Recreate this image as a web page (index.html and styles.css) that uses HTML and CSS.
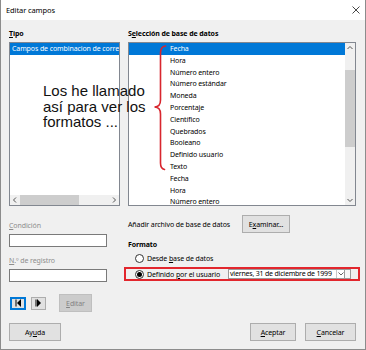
FILE: index.html
```html
<!DOCTYPE html>
<html lang="es">
<head>
    <meta charset="UTF-8">
    <meta name="viewport" content="width=device-width, initial-scale=1.0">
    <title>Editar campos</title>
    <link rel="stylesheet" href="styles.css">
</head>
<body>
<div class="window">
    <div class="titlebar">
        <span>Editar campos</span>
        <svg class="close" width="8" height="8" viewBox="0 0 8 8">
            <path d="M0.5 0.5 L7.5 7.5 M7.5 0.5 L0.5 7.5" stroke="#333" stroke-width="0.9" fill="none"/>
        </svg>
    </div>

    <div class="content">
        <!-- columna izquierda -->
        <div class="col col-left">
            <div class="label bold"><u>T</u>ipo</div>
            <div class="listbox type-list">
                <div class="rows">
                    <div class="row selected">Campos de combinacion de correspondencia</div>
                </div>
                <div class="hscroll">
                    <svg class="sb-arrow" width="10" height="10" viewBox="0 0 10 10"><path d="M6 2.5 L3.5 5 L6 7.5" stroke="#555" fill="none"/></svg>
                    <div class="htrack"><div class="hthumb"></div></div>
                    <svg class="sb-arrow" width="10" height="10" viewBox="0 0 10 10"><path d="M4 2.5 L6.5 5 L4 7.5" stroke="#555" fill="none"/></svg>
                </div>
            </div>

            <div class="label disabled mt-cond"><u>C</u>ondición</div>
            <div class="input"></div>
            <div class="label disabled mt-reg"><u>N</u>.º de registro</div>
            <div class="input"></div>

            <div class="nav-row">
                <button class="btn btn-nav focused">
                    <svg width="7" height="8" viewBox="0 0 7 8"><rect x="0.5" y="0.5" width="1" height="7" fill="#000"/><path d="M6 0 L2 4 L6 8 Z" fill="#000"/></svg>
                </button>
                <button class="btn btn-nav">
                    <svg width="7" height="8" viewBox="0 0 7 8"><rect x="0.5" y="0.5" width="1" height="7" fill="#000"/><path d="M2 0 L6 4 L2 8 Z" fill="#000"/></svg>
                </button>
                <button class="btn btn-edit" disabled><u>E</u>ditar</button>
            </div>
        </div>

        <!-- columna derecha -->
        <div class="col col-right">
            <div class="label bold">S<u>e</u>lección de base de datos</div>
            <div class="listbox db-list">
                <div class="rows">
                    <div class="row selected">Fecha</div>
                    <div class="row">Hora</div>
                    <div class="row">Número entero</div>
                    <div class="row">Número estándar</div>
                    <div class="row">Moneda</div>
                    <div class="row">Porcentaje</div>
                    <div class="row">Científico</div>
                    <div class="row">Quebrados</div>
                    <div class="row">Booleano</div>
                    <div class="row">Definido usuario</div>
                    <div class="row">Texto</div>
                    <div class="row">Fecha</div>
                    <div class="row">Hora</div>
                    <div class="row">Número entero</div>
                </div>
                <div class="vscroll">
                    <svg class="sb-arrow" width="10" height="10" viewBox="0 0 10 10"><path d="M2.5 6 L5 3.5 L7.5 6" stroke="#555" fill="none"/></svg>
                    <div class="vtrack"><div class="vthumb"></div></div>
                    <svg class="sb-arrow" width="10" height="10" viewBox="0 0 10 10"><path d="M2.5 4 L5 6.5 L7.5 4" stroke="#555" fill="none"/></svg>
                </div>
            </div>

            <div class="add-row">
                <span class="add-label">Añadir archivo de base de datos</span>
                <button class="btn btn-browse">E<u>x</u>aminar...</button>
            </div>

            <div class="label bold mt-format">Formato</div>
            <div class="radio-row">
                <span class="radio"></span>
                <span>Desde <u>b</u>ase de datos</span>
            </div>
            <div class="highlight">
                <span class="radio checked"></span>
                <span class="radio-text">Definido <u>p</u>or el usuario</span>
                <div class="combo">
                    <span class="combo-text">viernes, 31 de diciembre de 1999</span>
                    <span class="combo-btn">
                        <svg width="6" height="4" viewBox="0 0 6 4"><path d="M0.5 0.5 L3 3 L5.5 0.5" stroke="#666" fill="none"/></svg>
                    </span>
                    <span class="combo-extra"></span>
                </div>
            </div>
        </div>
    </div>

    <div class="footer">
        <button class="btn btn-help">Ay<u>u</u>da</button>
        <div class="footer-right">
            <button class="btn btn-ok"><u>A</u>ceptar</button>
            <button class="btn btn-cancel"><u>C</u>ancelar</button>
        </div>
    </div>

    <!-- anotación sobre la captura -->
    <div class="note">Los he llamado<br>así para ver los<br>formatos ...</div>
    <svg class="brace" width="366" height="350" viewBox="0 0 366 350">
        <path d="M165.5 46 C162 46.5 160.5 49 160.5 53 L160.5 100 C160.5 104.5 158.5 107 154.5 107 C158.5 107 160.5 109.5 160.5 114 L160.5 163 C160.5 167 162 169 164.5 169.5" stroke="#d8262e" stroke-width="1.6" fill="none" stroke-linecap="round"/>
    </svg>
</div>
</body>
</html>
```

FILE: styles.css
```css
* { box-sizing: border-box; }

body {
    margin: 0;
    font-family: "Noto Sans", "Open Sans", sans-serif;
    font-size: 7px;
    letter-spacing: -0.1px;
    color: #000;
    background: #fff;
}

u { text-decoration: underline; text-underline-offset: 1px; }

.window {
    position: relative;
    width: 366px;
    height: 350px;
    background: #f0f0f0;
    border: 1px solid #8c8c8c;
    border-top: none;
}

.titlebar {
    height: 20px;
    background: #fff;
    display: flex;
    align-items: center;
    justify-content: space-between;
    padding: 0 5px 0 5px;
    font-size: 7.5px;
}

.content {
    display: flex;
    gap: 8px;
    padding: 8px 0 0 8px;
}

.col { display: flex; flex-direction: column; }
.col-left { width: 111px; }
.col-right { width: 228px; }

.label {
    height: 12px;
    line-height: 12px;
    margin-bottom: 2px;
    white-space: nowrap;
}
.bold { font-weight: bold; }
.disabled { color: #8d8d8d; }
.mt-cond { margin-top: 14px; }
.mt-reg { margin-top: 8px; }
.mt-format { margin-top: 6px; margin-bottom: 1px; }

.listbox {
    height: 164px;
    background: #fff;
    border: 1px solid #828790;
    display: flex;
    overflow: hidden;
}
.type-list { flex-direction: column; }
.rows { flex: 1; overflow: hidden; }

.row {
    height: 11.8px;
    line-height: 11.8px;
    white-space: nowrap;
    overflow: hidden;
    padding-left: 2px;
}
.row.selected { background: #0078d7; color: #fff; }
.db-list .row { padding-left: 41px; }

.hscroll {
    height: 10px;
    display: flex;
    background: #f0f0f0;
}
.htrack { flex: 1; }
.hthumb { width: 59px; height: 100%; background: #cdcdcd; }

.vscroll {
    width: 10px;
    display: flex;
    flex-direction: column;
    background: #f0f0f0;
}
.vtrack { flex: 1; padding-top: 17px; }
.vthumb { height: 77px; background: #cdcdcd; }
.sb-arrow { display: block; flex: none; }

.input {
    width: 98px;
    height: 13px;
    background: #fff;
    border: 1px solid #7a7a7a;
}

.btn {
    font-family: inherit;
    font-size: 7px;
    letter-spacing: -0.1px;
    color: #000;
    background: #e1e1e1;
    border: 1px solid #adadad;
    padding: 0;
    height: 18px;
}

.nav-row {
    margin-top: 12px;
    height: 18px;
    display: flex;
    align-items: center;
    padding-left: 1px;
}
.btn-nav {
    width: 16px;
    height: 13px;
    display: flex;
    align-items: center;
    justify-content: center;
}
.btn-nav + .btn-nav { width: 15px; margin-left: 5px; }
.btn-nav.focused { border-color: #0078d7; box-shadow: inset 0 0 0 1px #0078d7; }
.btn-edit {
    width: 33px;
    margin-left: 13px;
    background: #cccccc;
    border-color: #bfbfbf;
    color: #838383;
}

.add-row {
    margin-top: 9px;
    height: 18px;
    display: flex;
    align-items: center;
}
.add-label { width: 114px; white-space: nowrap; }
.btn-browse { width: 48px; }

.radio-row {
    height: 12px;
    display: flex;
    align-items: center;
    padding-left: 7px;
    gap: 3px;
}

.radio {
    width: 9px;
    height: 9px;
    border: 1px solid #333;
    border-radius: 50%;
    background: #fff;
    flex: none;
    display: flex;
    align-items: center;
    justify-content: center;
}
.radio.checked::after {
    content: "";
    width: 5px;
    height: 5px;
    border-radius: 50%;
    background: #000;
}

.highlight {
    margin: 3px -4px 0 -4px;
    width: 236px;
    height: 14px;
    border: 2px solid #e2262d;
    display: flex;
    align-items: center;
    padding-left: 9px;
}
.radio-text { width: 84px; padding-left: 3px; white-space: nowrap; }

.combo {
    width: 123px;
    height: 10px;
    display: flex;
    background: #fff;
    border: 1px solid #9a9a9a;
}
.combo-text {
    flex: 1;
    padding-left: 1px;
    line-height: 8px;
    white-space: nowrap;
    letter-spacing: -0.2px;
}
.combo-btn {
    width: 8px;
    border-left: 1px solid #c8c8c8;
    display: flex;
    align-items: center;
    justify-content: center;
}
.combo-extra {
    width: 6px;
    border-left: 1px solid #9a9a9a;
    background: #f7f7f7;
}

.footer {
    margin-top: 11px;
    display: flex;
    justify-content: space-between;
    padding: 0 9px 0 8px;
}
.footer-right { display: flex; gap: 9px; }
.btn-help { width: 52px; }
.btn-ok { width: 46px; }
.btn-cancel { width: 51px; }

.note {
    position: absolute;
    left: 42px;
    top: 83px;
    font-family: "Liberation Sans", Arial, sans-serif;
    font-size: 15px;
    line-height: 15.5px;
    letter-spacing: 0;
    color: #111;
    white-space: nowrap;
    pointer-events: none;
}

.brace {
    position: absolute;
    left: -1px;
    top: 0;
    pointer-events: none;
}
```
